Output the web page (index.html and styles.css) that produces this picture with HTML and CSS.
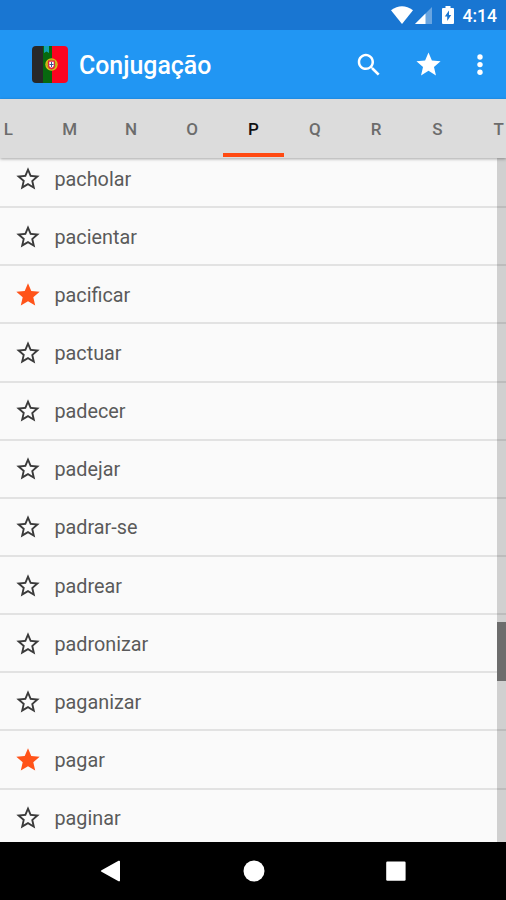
FILE: index.html
```
<!DOCTYPE html>
<html lang="pt">
<head>
<meta charset="utf-8">
<title>Conjugação</title>
<link rel="stylesheet" href="styles.css">
</head>
<body>
<svg width="0" height="0" class="defs">
  <symbol id="star" viewBox="0 0 24 24"><path d="M12 17.27 18.18 21l-1.64-7.03L22 9.24l-7.19-.61L12 2 9.19 8.63 2 9.24l5.46 4.73L5.82 21z"/></symbol>
  <symbol id="star-outline" viewBox="0 0 24 24"><path d="M22 9.24l-7.19-.62L12 2 9.19 8.63 2 9.24l5.46 4.73L5.82 21 12 17.27 18.18 21l-1.63-7.03L22 9.24zM12 15.4l-3.76 2.27 1-4.28-3.32-2.88 4.38-.38L12 6.1l1.71 4.04 4.38.38-3.32 2.88 1 4.28L12 15.4z"/></symbol>
</svg>
<div class="screen">
  <header class="status">
    <svg class="wifi" viewBox="0 0 22 18"><path d="M0 4.2Q11-3.8 22 4.2L11 18z"/></svg>
    <svg class="signal" viewBox="0 0 17 17"><path opacity=".35" d="M0 17 17 0v17z"/><path d="M0 17 10.5 6.5V17z"/></svg>
    <svg class="battery" viewBox="0 0 12 18"><path fill-rule="evenodd" d="M3.5 0h5v2H11q1 0 1 1v14q0 1-1 1H1q-1 0-1-1V3q0-1 1-1h2.5zM7 4.5 2.8 10.5h2.4V15l4-6H7z"/></svg>
    <span class="clock">4:14</span>
  </header>
  <div class="appbar">
    <svg class="logo" viewBox="0 0 36 37">
      <defs><clipPath id="round"><rect width="36" height="37" rx="4"/></clipPath></defs>
      <g clip-path="url(#round)">
        <path fill="#282828" d="M0 0h12v37H0z"/>
        <path fill="#07690f" d="M11 0h9v37h-9z"/>
        <path fill="#fb0420" d="M20 0h16v37H20z"/>
        <path fill="#10a2b0" d="M12 0h5v7l-2.500-1.500L12 7z"/>
      </g>
      <circle cx="19.500" cy="18.500" r="6.200" fill="#d9bd18"/>
      <circle cx="19.500" cy="18.500" r="4.500" fill="none" stroke="#8c9414" stroke-width=".6"/>
      <path fill="#e3213b" d="M16 14.500h7v5q0 3.500-3.500 4-3.500-.5-3.500-4z"/>
      <path fill="#fff" d="M17.300 15.800h4.400v3.500q0 2-2.200 2.500-2.200-.5-2.200-2.500z"/>
      <path fill="#3d548e" d="M19 16h1v5h-1zM17.500 18h4v1h-4z"/>
    </svg>
    <h1 class="title">Conjugação</h1>
    <svg class="search" viewBox="0 0 24 24"><path d="M15.500 14h-.79l-.28-.27C15.410 12.590 16 11.110 16 9.500 16 5.910 13.090 3 9.500 3S3 5.910 3 9.500 5.910 16 9.500 16c1.610 0 3.090-.59 4.230-1.570l.27.28v.79l5 4.990L20.490 19l-4.990-5zm-6 0C7.010 14 5 11.990 5 9.500S7.010 5 9.500 5 14 7.010 14 9.500 11.990 14 9.500 14z"/></svg>
    <svg class="favorite"><use href="#star"/></svg>
    <svg class="more" viewBox="0 0 6 22"><circle cx="3" cy="3" r="2.700"/><circle cx="3" cy="10.600" r="2.700"/><circle cx="3" cy="18.200" r="2.700"/></svg>
  </div>
  <nav class="tabs">
    <span class="tab">L</span><span class="tab">M</span><span class="tab">N</span><span class="tab">O</span><span class="tab active">P</span><span class="tab">Q</span><span class="tab">R</span><span class="tab">S</span><span class="tab">T</span>
  </nav>
  <main class="content">
    <ul class="verbs">
      <li class="verb"><svg class="star"><use href="#star-outline"/></svg><span>pacholar</span></li>
      <li class="verb"><svg class="star"><use href="#star-outline"/></svg><span>pacientar</span></li>
      <li class="verb"><svg class="star on"><use href="#star"/></svg><span>pacificar</span></li>
      <li class="verb"><svg class="star"><use href="#star-outline"/></svg><span>pactuar</span></li>
      <li class="verb"><svg class="star"><use href="#star-outline"/></svg><span>padecer</span></li>
      <li class="verb"><svg class="star"><use href="#star-outline"/></svg><span>padejar</span></li>
      <li class="verb"><svg class="star"><use href="#star-outline"/></svg><span>padrar-se</span></li>
      <li class="verb"><svg class="star"><use href="#star-outline"/></svg><span>padrear</span></li>
      <li class="verb"><svg class="star"><use href="#star-outline"/></svg><span>padronizar</span></li>
      <li class="verb"><svg class="star"><use href="#star-outline"/></svg><span>paganizar</span></li>
      <li class="verb"><svg class="star on"><use href="#star"/></svg><span>pagar</span></li>
      <li class="verb"><svg class="star"><use href="#star-outline"/></svg><span>paginar</span></li>
    </ul>
    <div class="scrollbar"><div class="thumb"></div></div>
  </main>
  <footer class="navbar">
    <svg viewBox="0 0 22 22"><path d="M1.500 10.200 18.500.8Q20 .3 20 1.500v19q0 1.200-1.500.7L1.500 11.800Q0 11 1.500 10.200z"/></svg>
    <svg viewBox="0 0 22 22"><circle cx="11" cy="11" r="10.500"/></svg>
    <svg viewBox="0 0 22 22"><rect x="1.200" y="1.600" width="19.400" height="19.200" rx="1.200"/></svg>
  </footer>
</div>
</body>
</html>
```
FILE: styles.css
```
body {
  margin: 0;
  font-family: Roboto, "Liberation Sans", sans-serif;
}

svg {
  flex: none;
  fill: #fff;
}

.defs {
  display: none;
}

.screen {
  display: flex;
  flex-direction: column;
  width: 506px;
  height: 900px;
  overflow: hidden;
  background: #fafafa;
}

.status {
  display: flex;
  align-items: center;
  justify-content: flex-end;
  height: 30px;
  padding-right: 9px;
  background: #1976d2;
  color: #fff;
}

.wifi {
  width: 22px;
  height: 18px;
}

.signal {
  width: 17px;
  height: 17px;
  margin-left: 2px;
}

.battery {
  width: 12px;
  height: 18px;
  margin: 0 9px 0 10px;
}

.clock {
  font-size: 17.5px;
  font-weight: 500;
  line-height: 30px;
  padding-top: 2px;
}

.appbar {
  display: flex;
  align-items: center;
  height: 69px;
  box-sizing: border-box;
  padding: 0 23px 0 32px;
  background: #2196f3;
}

.logo {
  width: 36px;
  height: 37px;
}

.title {
  flex: 1;
  margin: 2px 0 0 11px;
  font-size: 24.9px;
  font-weight: 500;
  color: #fff;
}

.search {
  width: 30px;
  height: 30px;
  margin-right: 30.5px;
}

.favorite {
  width: 29px;
  height: 29px;
  margin-right: 34px;
}

.more {
  width: 6px;
  height: 22px;
}

.tabs {
  display: flex;
  justify-content: center;
  height: 59px;
  padding-left: 1px;
  background: #dcdcdc;
  box-shadow: 0 1px 3px rgba(0, 0, 0, .35);
  z-index: 1;
}

.tab {
  flex: none;
  width: 61.3px;
  box-sizing: border-box;
  border-bottom: 4px solid transparent;
  text-align: center;
  font-size: 17px;
  font-weight: 500;
  line-height: 61px;
  color: #6c6c6c;
  height: 58px;
}

.tab.active {
  color: #111;
  border-bottom-color: #ff4a12;
}

.content {
  display: flex;
  height: 684px;
  overflow: hidden;
  position: relative;
}

.verbs {
  flex: 1;
  list-style: none;
  margin: -8px 0 0;
  padding: 0;
}

.verb {
  display: flex;
  align-items: center;
  box-sizing: border-box;
  height: 58.15px;
  padding-left: 13.5px;
  border-bottom: 2px solid #e2e2e2;
  font-size: 19.8px;
  color: #5a5a5a;
}

.verb span {
  margin: 2px 0 0 13px;
}

.star {
  width: 28px;
  height: 28px;
  margin-top: 1px;
  fill: #3a3a3a;
}

.star.on {
  fill: #ff5319;
}

.scrollbar {
  position: absolute;
  inset: 0 0 0 auto;
  width: 9px;
  background: rgba(0, 0, 0, .17);
}

.thumb {
  height: 59px;
  margin-top: 464px;
  background: #6d6d6d;
}

.navbar {
  display: flex;
  align-items: center;
  justify-content: center;
  gap: 120.5px;
  height: 58px;
  padding-left: 1px;
  background: #000;
}

.navbar svg {
  width: 22px;
  height: 22px;
}
```
